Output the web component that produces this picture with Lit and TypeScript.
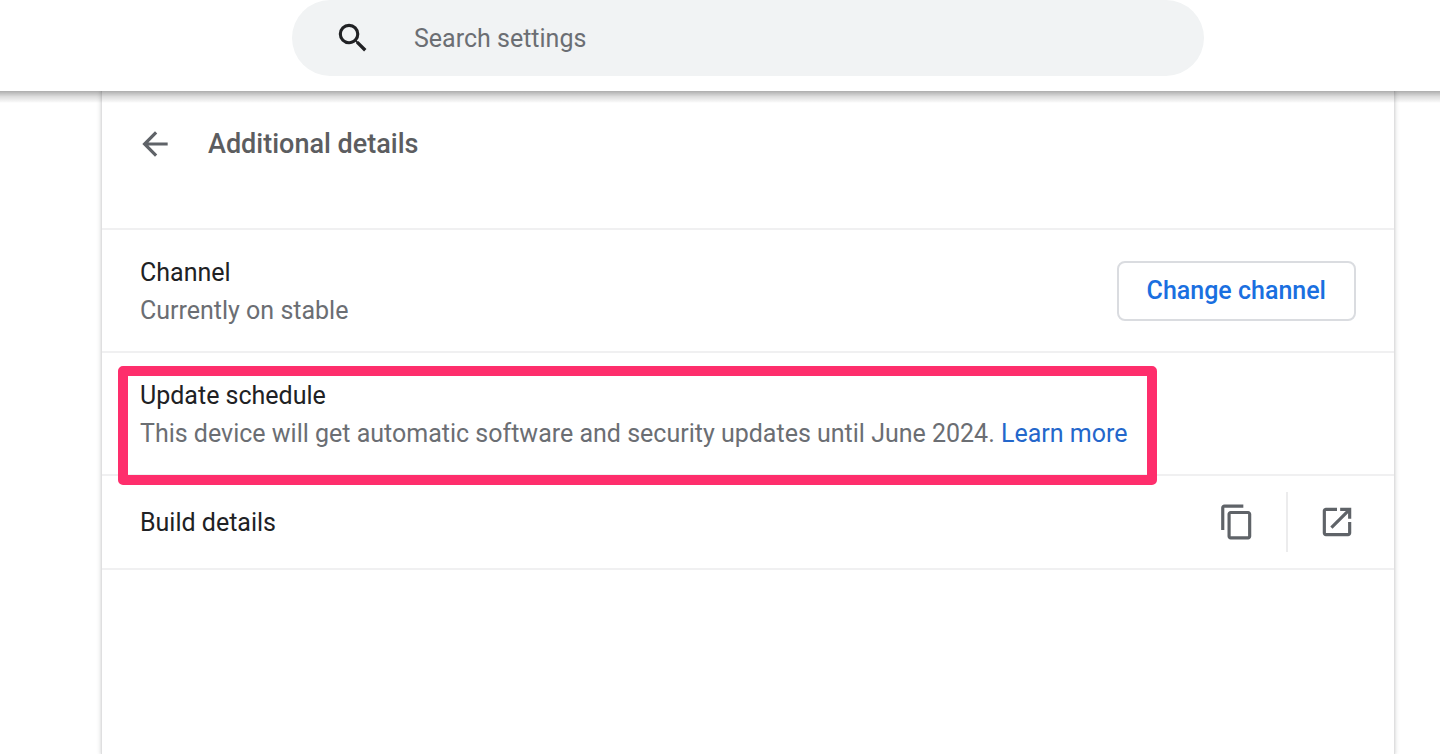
import { LitElement, html, css } from "lit";
import { customElement } from "lit/decorators.js";

const icon = (path: string) => html`
  <svg class="icon" viewBox="0 0 24 24" aria-hidden="true"><path d=${path}></path></svg>
`;

const SEARCH =
  "M15.5 14h-.79l-.28-.27A6.471 6.471 0 0 0 16 9.5 6.5 6.5 0 1 0 9.5 16c1.61 0 3.09-.59 4.23-1.57l.27.28v.79l5 4.99L20.49 19l-4.99-5zm-6 0C7.01 14 5 11.99 5 9.5S7.01 5 9.5 5 14 7.01 14 9.5 11.99 14 9.5 14z";
const BACK = "M20 11H7.83l5.59-5.59L12 4l-8 8 8 8 1.41-1.41L7.83 13H20v-2z";
const COPY =
  "M16 1H4c-1.1 0-2 .9-2 2v14h2V3h12V1zm3 4H8c-1.1 0-2 .9-2 2v14c0 1.1.9 2 2 2h11c1.1 0 2-.9 2-2V7c0-1.1-.9-2-2-2zm0 16H8V7h11v14z";
const OPEN =
  "M19 19H5V5h7V3H5c-1.11 0-2 .9-2 2v14c0 1.1.89 2 2 2h14c1.1 0 2-.9 2-2v-7h-2v7zM14 3v2h3.59l-9.83 9.83 1.41 1.41L19 6.41V10h2V3h-7z";

@customElement("app-root")
export class AppRoot extends LitElement {
  static styles = css`
    :host {
      display: flex;
      flex-direction: column;
      min-height: 100vh;
      background: #fff;
      color: #202124;
      font: 400 25px/38px Roboto, sans-serif;
    }
    * {
      box-sizing: border-box;
    }
    .toolbar {
      position: relative;
      z-index: 1;
      padding: 0 16px 15px 72px;
      background: #fff;
    }
    .toolbar::after {
      content: "";
      position: absolute;
      inset: 100% 0 auto;
      height: 12px;
      background: linear-gradient(rgba(0, 0, 0, 0.32), rgba(0, 0, 0, 0.14) 45%, rgba(0, 0, 0, 0.03) 90%, transparent);
      pointer-events: none;
    }
    .search {
      display: flex;
      align-items: center;
      gap: 42px;
      max-width: 912px;
      height: 76px;
      margin: 0 auto;
      padding: 0 42px;
      border-radius: 38px;
      background: #f1f3f4;
    }
    .field {
      flex: 1;
      min-width: 0;
      padding: 2px 0 0;
      border: 0;
      outline: 0;
      background: none;
      color: inherit;
      font: inherit;
    }
    .field::placeholder {
      color: #6b6e73;
      opacity: 1;
    }
    .icon {
      display: block;
      flex: none;
      width: 38px;
      height: 38px;
      fill: currentColor;
    }
    .content {
      display: flex;
      flex: 1;
      padding-left: 56px;
    }
    .card {
      flex: 1;
      max-width: 1292px;
      margin: 0 auto;
      box-shadow: 0 0 0 1px #dfdfe0, 0 0 4px 1px rgba(60, 64, 67, 0.26);
    }
    .heading {
      display: flex;
      align-items: center;
      gap: 34px;
      padding: 34px 34px 65px;
    }
    .title {
      margin: 0;
      color: #5c5d60;
      font-size: 27px;
      font-weight: 500;
      line-height: 38px;
    }
    .row {
      display: flex;
      align-items: center;
      justify-content: space-between;
      min-height: 123px;
      padding: 0 38px;
      border-top: 2px solid #f0f0f1;
    }
    .compact {
      min-height: 96px;
      border-bottom: 2px solid #f0f0f1;
    }
    .text {
      position: relative;
    }
    .text p,
    .label {
      margin: 0;
      font: inherit;
    }
    .label {
      padding-top: 2px;
    }
    .text .secondary {
      color: #6b6e73;
    }
    .highlight {
      position: absolute;
      inset: -9px -30px -32px -22px;
      border: 10px solid #fe2e6c;
      border-radius: 5px;
      pointer-events: none;
    }
    .link {
      color: #2467cb;
      text-decoration: none;
    }
    button {
      margin: 0;
      border: 0;
      background: none;
      font: inherit;
      cursor: pointer;
    }
    .outlined {
      height: 60px;
      padding: 0 28px;
      border: 2px solid #dadce0;
      border-radius: 8px;
      color: #1a6fe0;
      font-weight: 500;
    }
    .actions {
      display: flex;
      align-items: center;
      gap: 30px;
    }
    .icon-button {
      padding: 0;
      color: #5f6368;
    }
    .separator {
      width: 2px;
      height: 60px;
      background: #ececed;
    }
  `;

  render() {
    return html`
      <header class="toolbar">
        <label class="search">
          ${icon(SEARCH)}
          <input class="field" type="text" placeholder="Search settings" aria-label="Search settings" />
        </label>
      </header>
      <main class="content">
        <section class="card">
          <div class="heading">
            <button class="icon-button" aria-label="Back">${icon(BACK)}</button>
            <h1 class="title">Additional details</h1>
          </div>
          <div class="row">
            <div class="text">
              <h2 class="label">Channel</h2>
              <p class="secondary">Currently on stable</p>
            </div>
            <button class="outlined">Change channel</button>
          </div>
          <div class="row">
            <div class="text">
              <h2 class="label">Update schedule</h2>
              <p class="secondary">
                This device will get automatic software and security updates until June 2024.
                <a class="link" href="#">Learn more</a>
              </p>
              <div class="highlight"></div>
            </div>
          </div>
          <div class="row compact">
            <h2 class="label">Build details</h2>
            <div class="actions">
              <button class="icon-button" aria-label="Copy build details">${icon(COPY)}</button>
              <div class="separator"></div>
              <button class="icon-button" aria-label="Open build details">${icon(OPEN)}</button>
            </div>
          </div>
        </section>
      </main>
    `;
  }
}
